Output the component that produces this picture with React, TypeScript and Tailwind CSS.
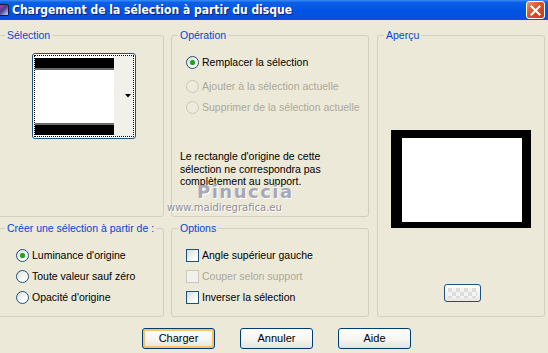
import type { ReactNode } from 'react'

const font = { fontFamily: '"Liberation Sans", Arial, sans-serif' }

function Radio({ checked, disabled }: { checked?: boolean; disabled?: boolean }) {
  return (
    <span
      className={`flex h-[13px] w-[13px] shrink-0 items-center justify-center rounded-full border ${
        disabled
          ? 'border-[#CAC8BB] bg-[#EEEBDD]'
          : 'border-[#1C5180] bg-[linear-gradient(135deg,#DCDCD4_0%,#FFFFFF_70%)]'
      }`}
    >
      {checked && <span className="h-[5px] w-[5px] rounded-full bg-[#21A121] shadow-[0_0_1px_#5ED15E]" />}
    </span>
  )
}

function Check({ disabled }: { disabled?: boolean }) {
  return (
    <span
      className={`block h-[13px] w-[13px] shrink-0 border ${
        disabled
          ? 'border-[#CAC8BB] bg-[#F2F1EA]'
          : 'border-[#1C5180] bg-[linear-gradient(135deg,#DCDCD4_0%,#FFFFFF_80%)]'
      }`}
    />
  )
}

function Group({ title, className, children }: { title: string; className: string; children?: ReactNode }) {
  return (
    <fieldset className={`min-w-0 rounded-[3px] border border-[#D0D0BF] ${className}`}>
      <legend className="ml-[6px] whitespace-nowrap px-[2px] text-[10.5px] leading-[13px] text-[#0046D5]">{title}</legend>
      {children}
    </fieldset>
  )
}

function Option({ kind, label, checked, disabled }: { kind: 'radio' | 'check'; label: string; checked?: boolean; disabled?: boolean }) {
  return (
    <div className="flex h-[21px] items-center">
      {kind === 'radio' ? <Radio checked={checked} disabled={disabled} /> : <Check disabled={disabled} />}
      <span className={`ml-[3px] whitespace-nowrap ${disabled ? 'text-[#ACA899]' : 'text-black'}`}>{label}</span>
    </div>
  )
}

function Button({ label, primary }: { label: string; primary?: boolean }) {
  return (
    <button
      className={`h-[21px] w-[73px] rounded-[3px] border border-[#003C74] bg-[linear-gradient(to_bottom,#FFFFFF_0%,#F3F3EF_60%,#E4E3DB_100%)] text-[11px] text-black ${
        primary ? 'shadow-[inset_0_0_0_2px_#F9C45E]' : ''
      }`}
    >
      {label}
    </button>
  )
}

export default function App() {
  return (
    <div className="relative h-[353px] w-[548px] overflow-hidden bg-[#ECE9D8] text-[10.5px] leading-[13px]" style={font}>
      {/* Title bar */}
      <div className="flex h-[20px] items-center bg-[linear-gradient(to_bottom,#3C8CF8_0%,#0B5FE8_12%,#0054E3_55%,#0A4FD8_100%)]">
        <div className="ml-[-3px] h-[12px] w-[12px] rounded-[2px] border border-[#1a1a40] bg-[linear-gradient(135deg,#d04080,#4040a0,#e0e0e0)]" />
        <span
          className="ml-[3px] text-[12px] font-bold text-white [text-shadow:1px_1px_0_#0A1E6E]"
          style={{ fontFamily: '"DejaVu Sans Condensed", "DejaVu Sans", sans-serif' }}
        >
          Chargement de la sélection à partir du disque
        </span>
        <div className="ml-auto mr-[3px] flex h-[18px] w-[19px] items-center justify-center rounded-[3px] border border-white bg-[linear-gradient(135deg,#F09070_0%,#E0502A_45%,#C8381A_100%)]">
          <svg width="11" height="11" viewBox="0 0 11 11">
            <path d="M1.5 1.5 L9.5 9.5 M9.5 1.5 L1.5 9.5" stroke="white" strokeWidth="2" strokeLinecap="square" />
          </svg>
        </div>
      </div>

      {/* Body */}
      <div className="flex pt-[9px]">
        <div className="ml-[-2px] flex w-[166px] flex-col gap-[5px]">
          <Group title="Sélection" className="h-[188px]">
            <div className="ml-[33px] mt-[11px] flex h-[86px] w-[104px] rounded-[3px] border border-[#1C5180] bg-white p-[1px]">
              <div className="flex flex-1 border border-dotted border-black">
                <div className="flex w-[79px] flex-col">
                  <div className="mt-[2px] h-[12px] border-b-2 border-[#6B6B6B] bg-black" />
                  <div className="flex-1 bg-white" />
                  <div className="mb-[1px] h-[12px] border-t-2 border-[#6B6B6B] bg-black" />
                </div>
                <div className="flex flex-1 items-center justify-end bg-[#F1F0EA] pr-[2px]">
                  <svg width="6" height="4" viewBox="0 0 6 4">
                    <path d="M0 0 H6 L3 3.5 Z" fill="black" />
                  </svg>
                </div>
              </div>
            </div>
          </Group>
          <Group title="Créer une sélection à partir de :" className="h-[95px]">
            <div className="ml-[17px] mt-[10px] flex flex-col">
              <Option kind="radio" label="Luminance d'origine" checked />
              <Option kind="radio" label="Toute valeur sauf zéro" />
              <Option kind="radio" label="Opacité d'origine" />
            </div>
          </Group>
        </div>

        <div className="ml-[7px] flex w-[198px] flex-col gap-[5px]">
          <Group title="Opération" className="h-[188px]">
            <div className="ml-[14px] mt-[10px] flex flex-col">
              <Option kind="radio" label="Remplacer la sélection" checked />
              <div className="h-[3px]" />
              <Option kind="radio" label="Ajouter à la sélection actuelle" disabled />
              <Option kind="radio" label="Supprimer de la sélection actuelle" disabled />
            </div>
            <p className="ml-[8px] mt-[32px] w-[180px] leading-[12.5px] text-black">
              Le rectangle d'origine de cette sélection ne correspondra pas complètement au support.
            </p>
          </Group>
          <Group title="Options" className="h-[95px]">
            <div className="ml-[14px] mt-[10px] flex flex-col">
              <Option kind="check" label="Angle supérieur gauche" />
              <Option kind="check" label="Couper selon support" disabled />
              <Option kind="check" label="Inverser la sélection" />
            </div>
          </Group>
        </div>

        <Group title="Aperçu" className="ml-[8px] h-[288px] w-[168px]">
          <div className="ml-[13px] mt-[88px] h-[98px] w-[140px] bg-black pb-[6px] pl-[11px] pr-[9px] pt-[8px]">
            <div className="h-full w-full bg-white" />
          </div>
          <div className="ml-[66px] mt-[56px] h-[18px] w-[37px] rounded-[3px] border border-[#1C5180] bg-[linear-gradient(to_bottom,#FFFFFF,#E8E7E0)] p-[3px]">
            <div className="h-full w-full bg-[repeating-conic-gradient(#F4F4F4_0%_25%,#DCDCDC_0%_50%)] bg-[length:8px_8px]" />
          </div>
        </Group>
      </div>

      {/* Buttons */}
      <div className="mt-[11px] flex gap-[25px] pl-[142px]">
        <Button label="Charger" primary />
        <Button label="Annuler" />
        <Button label="Aide" />
      </div>

      {/* Watermark */}
      <div className="pointer-events-none absolute left-[167px] top-[183px] flex flex-col items-start">
        <span className="ml-[30px] text-[18px] font-bold leading-[18px] tracking-[1.5px] text-[#A7A7B8] [text-shadow:1px_1px_0_#ffffff]" style={{ fontFamily: '"DejaVu Sans", sans-serif' }}>
          Pinuccia
        </span>
        <span className="mt-[1px] text-[10px] leading-[12px] text-[#8E8E9A] [text-shadow:1px_1px_0_#ffffff]" style={{ fontFamily: '"DejaVu Sans", sans-serif' }}>
          www.maidiregrafica.eu
        </span>
      </div>
    </div>
  )
}
